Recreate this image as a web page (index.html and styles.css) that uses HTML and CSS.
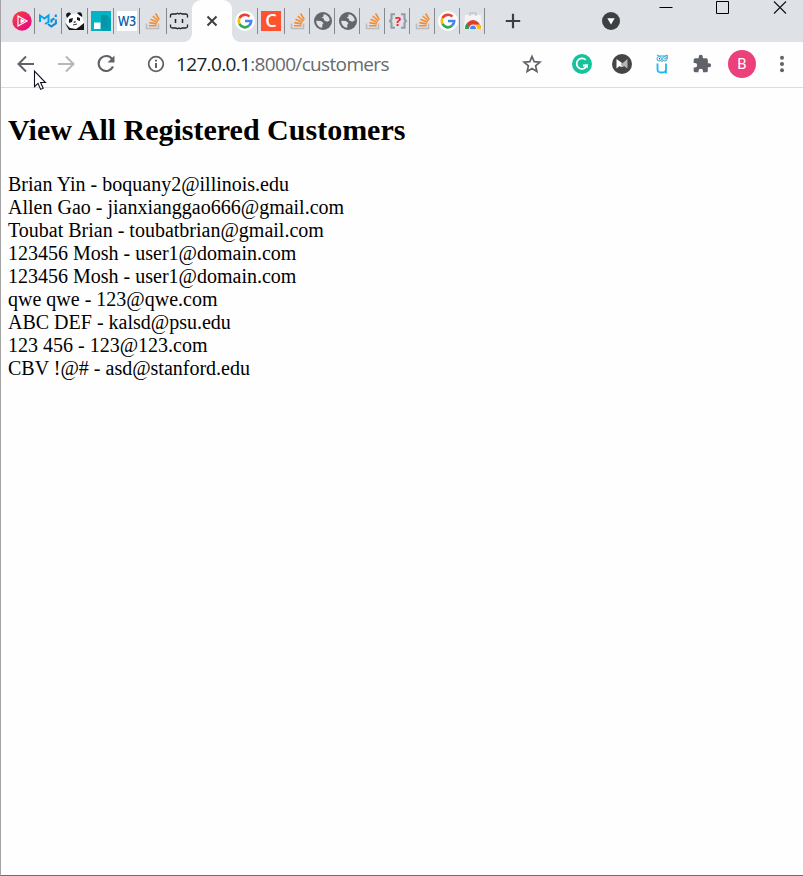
FILE: index.html
```html
<!DOCTYPE html>
<html lang="en">
<head>
<meta charset="utf-8">
<title>Customers</title>
<link rel="stylesheet" href="styles.css">
</head>
<body>
<svg class="symbols" aria-hidden="true">
  <symbol id="google" viewBox="0 0 20 20">
    <circle cx="10" cy="10" r="10" fill="#fff"/>
    <g fill="none" stroke-width="2.7">
      <path d="M4.5 7.1A6.2 6.2 0 0 1 14.4 5.6" stroke="#ea4335"/>
      <path d="M4.5 12.9A6.2 6.2 0 0 1 4.5 7.1" stroke="#fbbc05"/>
      <path d="M14 14.8A6.2 6.2 0 0 1 4.5 12.9" stroke="#34a853"/>
      <path d="M10 10h6.2a6.2 6.2 0 0 1-2.3 4.8" stroke="#4285f4"/>
    </g>
  </symbol>
  <symbol id="stack" viewBox="0 0 20 20">
    <path d="M3.5 12.500v5h12v-5" fill="none" stroke="#bcbbb9" stroke-width="1.5"/>
    <path d="M6 14.800h7.500M6.300 11.600l7.500 1.300M7.500 8.300l7 3M9.800 5.200l5.700 4.800M12.600 2.500l3.700 6.200" fill="none" stroke="#f78b30" stroke-width="1.6"/>
  </symbol>
  <symbol id="globe" viewBox="0 0 20 20">
    <circle cx="10" cy="10" r="9" fill="#63676b"/>
    <path d="M10.5 3.2c3.5.1 6.2 3 6.3 6.4l-2.7 1.2-2.8-1.2-.6-2.2-2.2-.7 2-1.3zM3.2 9.7l4.6.2 2.8 2-1.1 1.4-.3 3.5c-3.4-.3-6-3.3-6-7.1z" fill="#dee1e6"/>
  </symbol>
</svg>
<div class="window">
  <header class="tabs">
    <div class="tab first"><svg viewBox="0 0 20 20"><defs><linearGradient id="play" x2="1" y2="1"><stop stop-color="#f4443e"/><stop offset="1" stop-color="#e8008b"/></linearGradient></defs><circle cx="10" cy="10" r="9.7" fill="url(#play)"/><path d="M6 5v10l9-5z" fill="none" stroke="#fff" stroke-width="1.200"/><path d="M8.500 7.500v5l4.500-2.500z" fill="#fff"/></svg></div>
    <div class="tab wide"><svg viewBox="0 0 20 20"><path d="M2 11V4.5l4.5 3 4-3V11l-3.5 2" fill="none" stroke="#00a5ed" stroke-width="2"/><path d="M10 13l3.3 2.500 4.600-3V8.500M13.500 11.500V9l3-1.700M17.800 6V3.500" fill="none" stroke="#168bd5" stroke-width="2.100"/></svg></div>
    <div class="tab"><svg viewBox="0 0 20 20"><path d="M3 4l12-2 4 9-2 8H4L1 11z" fill="#fff"/><path d="M1 4c1-3 4-3 5-1L2 7zM12 2c3-2 6 0 5 4l-3-2zM4 8l4-1-1 4-3 1zM12 6l3 1v3l-3-1zM8 11l3-1-1 2zM0 12l5 5 6 1 3-2 5-4v7H4z" fill="#161616"/><path d="M8 14l4-1" stroke="#333"/></svg></div>
    <div class="tab"><svg viewBox="0 0 20 20"><path d="M0 0h20v20H0z" fill="#00b3c5"/><path d="M10 4h6v12h-6z" fill="#0794a6"/><path d="M16 4l4 4v12h-9l-2-4h7z" fill="#009fb0"/><path d="M3 11.500h6.500V18H3z" fill="#fff"/></svg></div>
    <div class="tab"><svg viewBox="0 0 20 20"><path d="M0 0h20v20H0z" fill="#fff"/><text x="1" y="15.400" class="w3" textLength="18" lengthAdjust="spacingAndGlyphs">W3</text></svg></div>
    <div class="tab wide"><svg><use href="#stack"/></svg></div>
    <div class="tab last"><svg viewBox="0 0 20 20"><path d="M1.500 6.500V4.500Q1.500 3 3.500 3h3.500l1.500-.8 1.500.8 1.500-.8 1.500.8h3.500q2 0 2 1.500v2M1.500 13.500v2q0 1.500 2 1.500h3.500l1.500.8 1.500-.8 1.500.8 1.500-.8h3.500q2 0 2-1.500v-2" fill="none" stroke="#222" stroke-width="1.300"/><path d="M6.500 8v4M13.500 8v4" stroke="#222" stroke-width="1.500"/></svg></div>
    <div class="active"><svg viewBox="0 0 20 20"><path d="M5.500 5.500l9 9M14.500 5.500l-9 9" stroke="#3c4043" stroke-width="2"/></svg></div>
    <div class="tab next"><svg><use href="#google"/></svg></div>
    <div class="tab wide"><svg viewBox="0 0 20 20"><path d="M0 0h20v20H0z" fill="#ff5330"/><text x="10" y="16.300" class="cc">C</text></svg></div>
    <div class="tab small"><svg><use href="#stack"/></svg></div>
    <div class="tab small"><svg><use href="#globe"/></svg></div>
    <div class="tab small"><svg><use href="#globe"/></svg></div>
    <div class="tab small"><svg><use href="#stack"/></svg></div>
    <div class="tab small"><svg viewBox="0 0 20 20"><path d="M7 3.200H3.500v5L2 10l1.500 1.800v5H7M13 3.200h3.500v5L18 10l-1.500 1.800v5H13" fill="none" stroke="#929ca7" stroke-width="2.100"/><text x="10" y="14.600" class="question">?</text></svg></div>
    <div class="tab small"><svg><use href="#stack"/></svg></div>
    <div class="tab small"><svg><use href="#google"/></svg></div>
    <div class="tab small"><svg viewBox="0 0 20 20"><path d="M2 4h16l1 14H1z" fill="#f4f4f4"/><path d="M7 5V2h6v3" fill="none" stroke="#c4c6ca" stroke-width="1.300"/><path d="M2 18a8 9 0 0 1 16 0z" fill="#e43b30"/><path d="M2 18a8 9 0 0 1 1.500-5.500l4 5.500z" fill="#2ba24c"/><path d="M12 13.500h4.800a8 9 0 0 1 1.200 4.500h-6z" fill="#fbc116"/><path d="M6 18a4 4.500 0 0 1 8 0z" fill="#fff"/><path d="M7 18a3 3.500 0 0 1 6 0z" fill="#4285f4"/></svg></div>
    <svg class="plus" viewBox="0 0 20 20"><path d="M10 2.800v14.400M2.800 10h14.400" stroke="#3c4043" stroke-width="2.200"/></svg>
    <svg class="search" viewBox="0 0 20 20"><circle cx="10" cy="10" r="9" fill="#3c4043"/><path d="M6.300 7.300h7.400L10 13.500z" fill="#fff"/></svg>
    <div class="controls">
      <svg viewBox="0 0 14 14"><path d="M.5 7.500h13" stroke="#000"/></svg>
      <svg viewBox="0 0 14 14"><path d="M.5 1.500h12v12H.5z" fill="none" stroke="#000"/></svg>
      <svg viewBox="0 0 14 14"><path d="M1 1.500l12 12M13 1.500l-12 12" stroke="#111" stroke-width="1.100"/></svg>
    </div>
  </header>
  <nav class="toolbar">
    <svg class="back" viewBox="0 0 20 20"><path d="M18 10H3M10 2.500L2.500 10l7.500 7.500" fill="none" stroke="#5f6368" stroke-width="2"/></svg>
    <svg class="forward" viewBox="0 0 20 20"><path d="M2 10h15M10 2.500l7.500 7.500-7.500 7.500" fill="none" stroke="#b5b7b9" stroke-width="2"/></svg>
    <svg class="reload" viewBox="0 0 20 20"><path d="M16.300 5.200A7.500 7.500 0 1 0 17 12.500" fill="none" stroke="#5f6368" stroke-width="2.100"/><path d="M18.500 1.500v7h-7z" fill="#5f6368"/></svg>
    <svg class="info" viewBox="0 0 20 20"><circle cx="10" cy="10" r="7.300" fill="none" stroke="#5f6368" stroke-width="1.800"/><path d="M10 9v5M10 5.700v1.800" stroke="#5f6368" stroke-width="2"/></svg>
    <div class="url">127.0.0.1<span>:8000/customers</span></div>
    <svg class="star" viewBox="0 0 20 20"><path d="M10 2.500l2.200 5.200 5.700.5-4.300 3.700 1.300 5.600-4.900-3-4.900 3 1.300-5.600-4.300-3.700 5.700-.5z" fill="none" stroke="#5f6368" stroke-width="1.700"/></svg>
    <div class="extensions">
      <svg viewBox="0 0 20 20"><circle cx="10" cy="10" r="10" fill="#15c39a"/><path d="M13.700 5.900a5.300 5.300 0 1 0 1.200 5.600h-4" fill="none" stroke="#fff" stroke-width="1.800"/><path d="M12.500 10.500h3.300v4z" fill="#fff"/></svg>
      <svg viewBox="0 0 20 20"><circle cx="10" cy="10" r="10" fill="#454545"/><path d="M4.500 5L10 9l-1 1.500 3 1.500-3 1-1.500-1-3 2.500z" fill="#fff"/><path d="M15.500 5v9.500L12 12l-2 1-1-2.500z" fill="#b5b5b5"/></svg>
      <svg viewBox="0 0 20 20"><path d="M5.500 9.500V15q0 3.500 3.500 3.500h1.500q3.500 0 3.500-3.500V9.500M14 15v4.500" fill="none" stroke="#25b5ef" stroke-width="1.800"/><path d="M4.800 1l2.200 1h6l2.200-1v4" fill="none" stroke="#25a7d9"/><circle cx="7.200" cy="4.800" r="2.200" fill="#fff" stroke="#25a7d9"/><circle cx="12.800" cy="4.800" r="2.200" fill="#fff" stroke="#25a7d9"/><path d="M7 4h1v1.500H7zM12.500 4h1v1.500h-1zM9.500 6.500h1V8h-1z" fill="#197aa5"/></svg>
      <svg viewBox="0 0 24 24"><path d="M20.500 11H19V7a2 2 0 0 0-2-2h-4V3.500a2.500 2.500 0 0 0-5 0V5H4a2 2 0 0 0-2 2v3.800h1.500a2.700 2.700 0 0 1 0 5.400H2V20a2 2 0 0 0 2 2h3.800v-1.500a2.700 2.700 0 0 1 5.400 0V22H17a2 2 0 0 0 2-2v-4h1.500a2.500 2.500 0 0 0 0-5z" fill="#5f6368"/></svg>
    </div>
    <div class="avatar">B</div>
    <svg class="menu" viewBox="0 0 20 20"><g fill="#5f6368"><circle cx="10" cy="3.800" r="2"/><circle cx="10" cy="10" r="2"/><circle cx="10" cy="16.200" r="2"/></g></svg>
    <svg class="cursor" viewBox="0 0 14 21"><path d="M1.500 1.200v15.500l3.500-3.300 2.600 6 2.600-1.100-2.600-5.800h4.800z" fill="#fff" stroke="#101020" stroke-width="1.100"/></svg>
  </nav>
  <main>
    <h2>View All Registered Customers</h2>
    <div>Brian Yin - boquany2@illinois.edu</div>
    <div>Allen Gao - jianxianggao666@gmail.com</div>
    <div>Toubat Brian - toubatbrian@gmail.com</div>
    <div>123456 Mosh - user1@domain.com</div>
    <div>123456 Mosh - user1@domain.com</div>
    <div>qwe qwe - 123@qwe.com</div>
    <div>ABC DEF - kalsd@psu.edu</div>
    <div>123 456 - 123@123.com</div>
    <div>CBV !@# - asd@stanford.edu</div>
  </main>
</div>
</body>
</html>
```
FILE: styles.css
```css
* { box-sizing: border-box; }
body { margin: 0; background: #fefefe; overflow: hidden; }
svg { display: block; width: 20px; height: 20px; flex: none; overflow: visible; }
.symbols { position: absolute; width: 0; height: 0; }
.window { height: 876px; display: flex; flex-direction: column; border-left: 1px solid #a4a4a4; border-bottom: 1px solid #6d6d6d; }
.tabs { height: 42px; flex: none; display: flex; align-items: flex-start; background: #dee1e6; padding-left: 8px; }
.tab { width: 26px; height: 26px; margin-top: 8px; display: flex; align-items: center; justify-content: center; border-right: 1px solid #85888c; flex: none; }
.wide { width: 27px; }
.small { width: 25px; padding-left: 2px; }
.tab.last { width: 25px; border-right: 0; padding-right: 2px; }
.active { width: 40px; height: 42px; background: #fefefe; border-radius: 9px 9px 0 0; display: flex; align-items: center; justify-content: center; position: relative; flex: none; }
.active::before, .active::after { content: ""; position: absolute; bottom: 0; width: 8px; height: 8px; }
.active::before { right: 100%; background: radial-gradient(circle at 0 0, transparent 7.5px, #fefefe 8px); }
.active::after { left: 100%; background: radial-gradient(circle at 100% 0, transparent 7.5px, #fefefe 8px); }
.w3 { font: 600 15px "Open Sans", sans-serif; fill: #075ca9; }
.cc { font: 600 18px "Open Sans", sans-serif; fill: #fff; text-anchor: middle; }
.question { font: bold 13px "Open Sans", sans-serif; fill: #f21d2f; text-anchor: middle; }
.plus { margin: 11px 0 0 18px; }
.search { margin: 11px 0 0 78px; }
.controls { display: flex; gap: 43px; margin-left: 38px; }
.controls svg { width: 14px; height: 14px; }
.toolbar { height: 46px; flex: none; display: flex; align-items: center; border-bottom: 1px solid #dadce0; padding: 0 0 1px 15px; position: relative; }
.forward { margin-left: 20px; }
.reload { margin-left: 20px; }
.info { margin-left: 30px; }
.url { width: 356px; flex: none; padding-left: 10px; font: 19px/26px "Open Sans", sans-serif; letter-spacing: -0.66px; color: #202124; white-space: nowrap; }
.url span { color: #666a6e; }
.extensions { display: flex; gap: 20px; margin-left: 30px; }
.avatar { width: 28px; height: 28px; flex: none; margin-left: 16px; border-radius: 50%; background: #ec407a; color: #fff; font: 15px/28px Roboto, sans-serif; text-align: center; }
.menu { margin-left: 16px; }
.cursor { position: absolute; left: 32px; top: 28px; width: 14px; height: 21px; }
main { padding: 25px 7px; font: 20px/23px "Liberation Serif", serif; color: #000; }
h2 { margin: 0 0 26px; font-size: 30px; line-height: 34px; }
```
